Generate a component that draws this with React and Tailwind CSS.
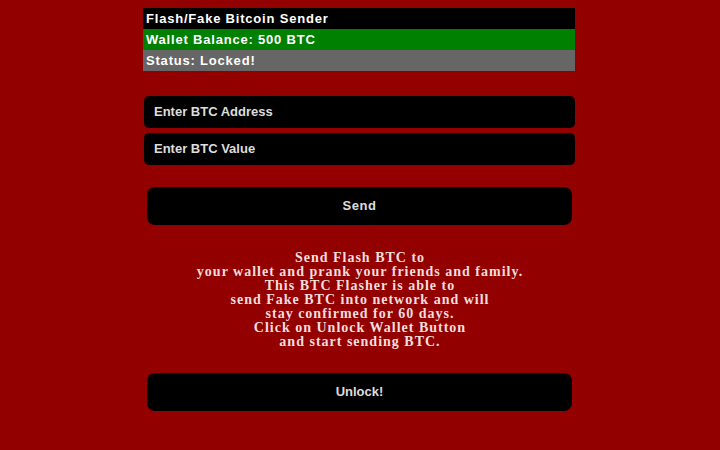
import React from "react";

const App = () => {
  return (
    <div className="w-[720px] h-[450px] overflow-hidden bg-[#930000] pt-2 font-['Liberation_Sans',Arial,sans-serif]">
      <div className="w-[432px] ml-[143px]">
        <div className="h-[21px] bg-black text-white text-[13px] tracking-[0.8px] font-bold flex items-center pl-[3px]">
          Flash/Fake Bitcoin Sender
        </div>
        <div className="h-[21px] bg-[#008000] text-white text-[13px] tracking-[0.8px] font-bold flex items-center pl-[3px]">
          Wallet Balance: 500 BTC
        </div>
        <div className="h-[21px] bg-[#666666] text-white text-[13px] tracking-[0.8px] font-bold flex items-center pl-[3px]">
          Status: Locked!
        </div>
      </div>

      <div className="w-[431px] ml-[144px] mt-[25px] flex flex-col gap-[5px]">
        <div className="h-[32px] bg-black rounded-[5px] flex items-center pl-[10px] text-[13px] font-bold text-[#dddddd]">
          Enter BTC Address
        </div>
        <div className="h-[32px] bg-black rounded-[5px] flex items-center pl-[10px] text-[13px] font-bold text-[#dddddd]">
          Enter BTC Value
        </div>
      </div>

      <div className="w-[425px] ml-[147px] mt-[22px] h-[38px] bg-black rounded-[8px] flex items-center justify-center text-[13px] tracking-[0.5px] font-bold text-[#dddddd]">
        Send
      </div>

      <div className="mt-[26px] text-center text-[14px] leading-[14px] tracking-[1px] font-bold text-[#f3dede] font-['Liberation_Serif','Times_New_Roman',serif]">
        <p>Send Flash BTC to</p>
        <p>your wallet and prank your friends and family.</p>
        <p>This BTC Flasher is able to</p>
        <p>send Fake BTC into network and will</p>
        <p>stay confirmed for 60 days.</p>
        <p>Click on Unlock Wallet Button</p>
        <p>and start sending BTC.</p>
      </div>

      <div className="w-[425px] ml-[147px] mt-[24px] h-[38px] bg-black rounded-[8px] flex items-center justify-center text-[13px] font-bold text-[#dddddd]">
        Unlock!
      </div>
    </div>
  );
};

export default App;
